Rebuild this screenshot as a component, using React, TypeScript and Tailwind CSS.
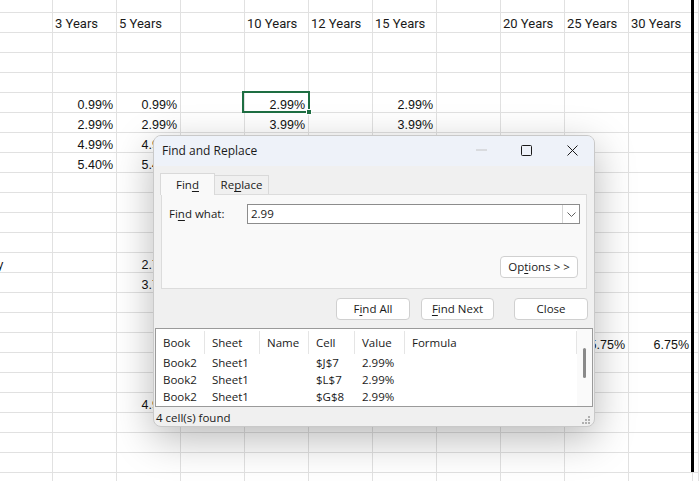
import type { ReactNode } from 'react';

type Cell = { text: string; right?: boolean; shift?: string };

const COLS = 11;
const ROWS = 25;

// row index -> column index -> cell
const sheet: Record<number, Record<number, Cell>> = {
  1: {
    1: { text: '3 Years' },
    2: { text: '5 Years' },
    4: { text: '10 Years' },
    5: { text: '12 Years' },
    6: { text: '15 Years' },
    8: { text: '20 Years' },
    9: { text: '25 Years' },
    10: { text: '30 Years' },
  },
  5: { 1: { text: '0.99%', right: true }, 2: { text: '0.99%', right: true }, 4: { text: '2.99%', right: true }, 6: { text: '2.99%', right: true } },
  6: { 1: { text: '2.99%', right: true }, 2: { text: '2.99%', right: true }, 4: { text: '3.99%', right: true }, 6: { text: '3.99%', right: true } },
  7: { 1: { text: '4.99%', right: true }, 2: { text: '4.99%', right: true } },
  8: { 1: { text: '5.40%', right: true }, 2: { text: '5.40%', right: true } },
  13: { 0: { text: 'y', shift: 'ml-[-5px]' }, 2: { text: '2.75%', right: true } },
  14: { 2: { text: '3.75%', right: true } },
  17: { 9: { text: '5.75%', right: true }, 10: { text: '6.75%', right: true } },
  20: { 2: { text: '4.99%', right: true } },
};

function Sheet() {
  const rows = [];
  for (let r = 0; r < ROWS; r++) {
    const h = r === 0 ? 'h-[13px]' : 'h-[20px]';
    for (let c = 0; c <= COLS; c++) {
      const cell = sheet[r]?.[c];
      const isHeader = r === 1;
      rows.push(
        <div
          key={`${r}-${c}`}
          className={`${h} border-b border-r border-[#e1e1e1] overflow-hidden flex items-end pb-[1px] whitespace-nowrap ${
            cell?.right ? 'justify-end pr-[3px]' : 'pl-[2px]'
          }`}
        >
          {cell && (
            <span
              className={`${cell.shift ?? ''} leading-none ${
                isHeader
                  ? 'mb-[1px] text-[13px] font-["Roboto",sans-serif] text-[#1a1a1a]'
                  : 'mb-0 text-[12.5px] font-["Liberation_Sans",Arial,sans-serif] text-[#111]'
              }`}
            >
              {cell.text}
            </span>
          )}
        </div>
      );
    }
  }
  return (
    <div className="grid grid-cols-[53px_repeat(10,64px)_1fr] bg-white">{rows}</div>
  );
}

function Btn({ children, className = '' }: { children: ReactNode; className?: string }) {
  return (
    <div
      className={`h-[22px] flex items-center justify-center bg-white border border-[#d0d0d0] rounded-[4px] text-[#1a1a1a] ${className}`}
    >
      {children}
    </div>
  );
}

const listRows = [
  ['Book2', 'Sheet1', '', '$J$7', '2.99%'],
  ['Book2', 'Sheet1', '', '$L$7', '2.99%'],
  ['Book2', 'Sheet1', '', '$G$8', '2.99%'],
];
const colW = ['w-[49px]', 'w-[55px]', 'w-[49px]', 'w-[46px]', 'w-[50px]', 'w-[172px]'];
const heads = ['Book', 'Sheet', 'Name', 'Cell', 'Value', 'Formula'];

function Dialog() {
  return (
    <div className='absolute left-[153px] top-[135px] w-[442px] h-[292px] rounded-[8px] border border-[#c9c9c9] bg-[#f0f0f0] shadow-[0_12px_40px_rgba(0,0,0,0.28)] overflow-hidden font-["Open_Sans",sans-serif] text-[11.5px] text-[#1a1a1a]'>
      {/* title bar */}
      <div className="h-[30px] bg-[#eef2f9] flex items-center pl-[8px] relative">
        <span className="text-[12px]">Find and Replace</span>
        <svg className="absolute left-[322px] top-[13px]" width="12" height="2" viewBox="0 0 12 2">
          <line x1="0" y1="1" x2="11" y2="1" stroke="#c4c4c4" strokeWidth="1" />
        </svg>
        <svg className="absolute left-[367px] top-[9px]" width="11" height="11" viewBox="0 0 11 11">
          <rect x="0.5" y="0.5" width="10" height="10" rx="1" fill="none" stroke="#1a1a1a" strokeWidth="1" />
        </svg>
        <svg className="absolute left-[413px] top-[9px]" width="11" height="11" viewBox="0 0 11 11">
          <path d="M0.5 0.5 L10.5 10.5 M10.5 0.5 L0.5 10.5" stroke="#1a1a1a" strokeWidth="1" />
        </svg>
      </div>

      {/* tabs */}
      <div className="mt-[7px] ml-[6px] flex items-end h-[21px] relative z-10">
        <div className="h-[22px] w-[55px] bg-[#f9f9f9] border border-b-0 border-[#d9d9d9] flex items-center justify-center mb-[-1px]">
          Fin<u className="underline-offset-2">d</u>
        </div>
        <div className="h-[19px] w-[54px] bg-[#f0f0f0] border border-l-0 border-b-0 border-[#d9d9d9] flex items-center justify-center">
          Re<u className="underline-offset-2">p</u>lace
        </div>
      </div>

      {/* panel */}
      <div className="mx-[7px] h-[95px] bg-[#f9f9f9] border border-[#dcdcdc] relative">
        <div className="flex items-center mt-[9px]">
          <span className="w-[85px] pl-[7px]">
            Fi<u className="underline-offset-2">n</u>d what:
          </span>
          <div className="h-[20px] w-[333px] bg-white border border-[#8c8c8c] flex items-center">
            <span className="flex-1 pl-[3px]">2.99</span>
            <div className="h-full w-[17px] border-l border-[#d6d6d6] flex items-center justify-center">
              <svg width="9" height="5" viewBox="0 0 9 5">
                <path d="M0.5 0.5 L4.5 4.5 L8.5 0.5" fill="none" stroke="#606060" strokeWidth="1" />
              </svg>
            </div>
          </div>
        </div>
        <div className="flex justify-end mt-[32px] pr-[8px]">
          <Btn className="w-[78px] h-[22px]">
            Op<u className="underline-offset-2">t</u>ions &gt; &gt;
          </Btn>
        </div>
      </div>

      {/* buttons */}
      <div className="flex justify-end mt-[9px] pr-[6px] gap-[11px]">
        <Btn className="w-[74px]">
          F<u className="underline-offset-2">i</u>nd All
        </Btn>
        <Btn className="w-[73px] border-[#0067c0] mr-[9px]">
          <u className="underline-offset-2">F</u>ind Next
        </Btn>
        <Btn className="w-[74px]">Close</Btn>
      </div>

      {/* results list */}
      <div className="mt-[8px] mx-px h-[79px] bg-white border border-[#9a9a9a] flex overflow-hidden">
        <div className="flex-1">
          <div className="flex h-[25px] pt-[2px]">
            {heads.map((h, i) => (
              <div key={h} className={`${colW[i]} h-[23px] flex items-center pl-[7px] border-r border-[#e5e5e5]`}>
                {h}
              </div>
            ))}
          </div>
          {listRows.map((row, ri) => (
            <div key={ri} className="flex h-[17px] items-center">
              {row.map((v, i) => (
                <div key={i} className={`${colW[i]} pl-[7px] whitespace-nowrap`}>
                  {v}
                </div>
              ))}
            </div>
          ))}
        </div>
        <div className="w-[17px] bg-[#fafafa] relative">
          <div className="absolute left-[6px] top-[19px] w-[3px] h-[30px] rounded-full bg-[#8a8a8a]" />
        </div>
      </div>

      {/* status bar */}
      <div className="h-[21px] flex items-center pl-[2px] relative">
        <span>4 cell(s) found</span>
        <svg className="absolute right-[3px] bottom-[3px]" width="9" height="9" viewBox="0 0 9 9">
          <rect x="6" y="0" width="2" height="2" fill="#b0b0b0" />
          <rect x="3" y="3" width="2" height="2" fill="#b0b0b0" />
          <rect x="6" y="3" width="2" height="2" fill="#b0b0b0" />
          <rect x="0" y="6" width="2" height="2" fill="#b0b0b0" />
          <rect x="3" y="6" width="2" height="2" fill="#b0b0b0" />
          <rect x="6" y="6" width="2" height="2" fill="#b0b0b0" />
        </svg>
      </div>
    </div>
  );
}

export default function App() {
  return (
    <div className="relative w-[699px] h-[481px] overflow-hidden bg-white">
      <Sheet />
      {/* active cell */}
      <div className="absolute left-[242px] top-[91px] w-[68px] h-[22px] border-2 border-[#1e6e42]" />
      <div className="absolute left-[306px] top-[109px] w-[6px] h-[6px] bg-[#1e6e42] border border-white" />
      {/* page break line */}
      <div className="absolute left-[691px] top-0 w-[3px] h-[472px] bg-black" />
      <Dialog />
    </div>
  );
}
